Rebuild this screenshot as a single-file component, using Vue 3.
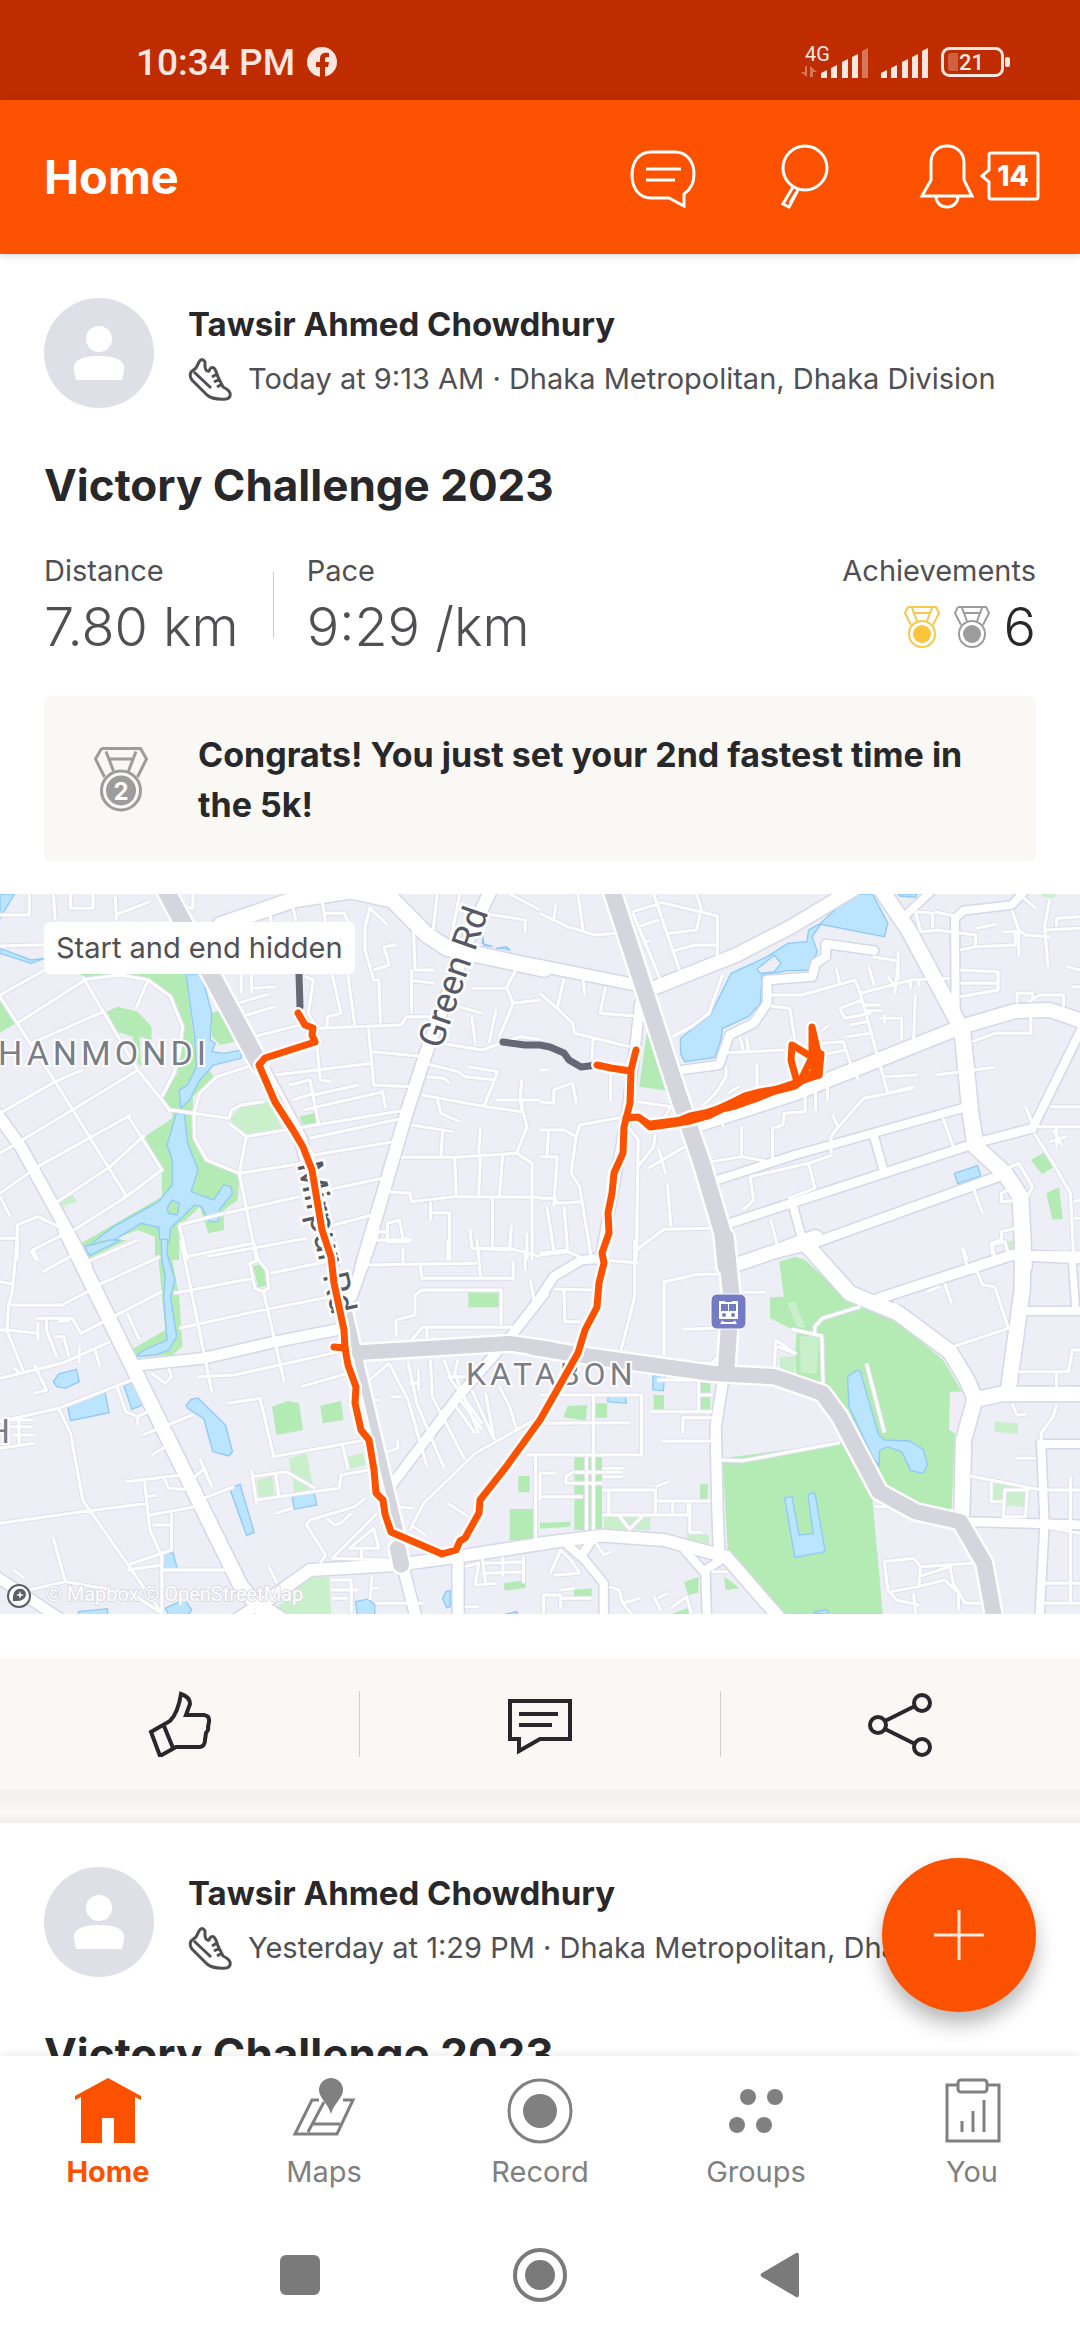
<script setup>
import { ref } from 'vue'

// feed posts
const posts = [
  {
    id: 1,
    athlete: 'Tawsir Ahmed Chowdhury',
    meta: 'Today at 9:13 AM · Dhaka Metropolitan, Dhaka Division',
    title: 'Victory Challenge 2023',
    distance: '7.80 km',
    pace: '9:29 /km',
    achievements: 6,
    congrats: 'Congrats! You just set your 2nd fastest time in the 5k!'
  },
  {
    id: 2,
    athlete: 'Tawsir Ahmed Chowdhury',
    meta: 'Yesterday at 1:29 PM · Dhaka Metropolitan, Dhaka Division',
    title: 'Victory Challenge 2023'
  }
]

const tabs = ['Home', 'Maps', 'Record', 'Groups', 'You']
const activeTab = ref('Home')

// signal bars: x and height
const signalBars = [[0, 8], [10, 13], [21, 19], [31, 24], [41, 30]]

// The map is split in four tiles, each with its own origin.
// roads: [width, path], highways: [width, path]
const tiles = [
  {
    at: 'translate(0 -14) scale(.3444 .3333)',
    park: 'M230 280H540L565 500L620 590L560 650V760L600 830L695 890L690 960L650 990V1050L605 1060L580 980L520 1040V1140H450V1070L400 1050L250 1110L235 1090L470 950L470 870L420 770L500 715V690L465 660L515 580L530 440L495 350L430 300L350 285L250 298ZM310 395L340 380L400 395L440 440V480L405 470L410 560L395 540L385 470L340 455ZM615 400L640 390L680 485L640 495L615 470ZM870 710L920 697L925 730L880 738ZM0 350L45 430L0 458Z',
    light: 'M670 715L700 680L780 665L820 745L720 768L680 750ZM170 960L210 945L225 965L190 975L180 1000Z',
    water: 'M0 42H42L0 115ZM0 205L90 240L130 235L90 250L0 220ZM540 282H585L615 400L610 480L625 490L615 515L650 520L700 510V535L620 555L580 600L550 660L525 685L520 630L545 615L570 560L565 470ZM512 700H535L545 790L575 870L555 935L620 960L650 915L670 920L675 940L640 985L632 1025H608L585 980L565 975L495 1045L487 1142H472L460 1042L410 1030L260 1125L247 1105L330 1040L460 965L500 915V840L485 795ZM1402 165L1400 190L1430 200L1405 196ZM1440 205L1470 200L1482 212L1465 206Z',
    island: 'M485 985L500 960L520 970L515 1005L490 1000Z',
    minor: 'M0 105H85V42M155 42L160 120M205 42V85H270V42M335 50L338 120M335 105L435 65M560 42V85L545 82M0 198L130 194M0 345L130 270M240 290L300 395L400 570L470 660L495 695M250 298L350 285L430 300L495 350L530 440L520 520L505 580L470 650M430 300L395 385M0 350L160 605L365 945L355 960M50 430L250 298M90 490L300 395M0 700L160 605L240 570M0 820L210 690L400 570M110 860L380 705M160 970L320 860L420 765M0 940L110 860M215 1050L360 955L470 870L370 705M720 560L630 590L580 640L563 700L565 775L600 840L695 880M495 690L665 715L672 690L700 675L765 665M665 730L715 770L860 745L1180 690M715 770L695 880L745 1140M695 880L880 850M655 1000L870 950M520 1035L650 1000M520 1035L545 1140M600 1130L890 1075M900 775L1170 715M910 825L1145 785M950 930L1110 895M970 1035L1080 1005M720 475L870 435L925 445L1165 435L1180 410H1290M915 445L930 600L960 605M800 585L1080 550M1070 445L1085 615L1200 620M1080 515L1240 530M840 615L900 600L925 730M850 660L910 640M910 645L1040 615M880 690L1115 635M1110 630L1120 685M690 370L780 342M700 410L798 380M730 340V285M735 325L798 320M700 285V340M885 290L910 300L895 400L920 445M965 285L990 400L950 410V440M1010 285L1030 435M850 80L860 125M785 100V125M935 60L945 125M940 100H1000L1010 125M1075 80L1060 140L1060 210L1085 300H1100L1105 430M1075 85L1125 135M1085 270L1130 255L1115 200L1150 195M1200 130L1205 270H1260M1195 270V400M1190 300L1260 310M1270 42L1255 170M1335 42L1310 170M1400 100L1525 120V160M1480 42L1568 90M1280 490L1400 510L1510 470L1568 478M1300 370L1400 400M1440 390L1420 490M1370 410L1380 490M1470 320L1490 370L1450 470M1370 325H1470L1510 245M1490 370L1568 360M1230 550L1330 575L1350 590L1440 600M1360 560L1445 575L1405 680M1240 590L1290 595L1305 610M1225 645L1410 680L1515 695V660M1440 660H1568M1270 660L1280 700L1335 725M1195 735L1315 755M1165 832H1320L1500 820L1545 850V1140M1285 755L1280 830M1320 830L1325 950M1395 820L1390 945M1460 820L1450 950M1395 740L1390 820M1130 935L1190 940L1195 965L1320 950L1568 952M1250 965V1020M1250 998H1305V1140M1430 950V1105M1485 1035L1480 1110L1370 1105L1365 1050M1515 600L1510 660L1530 740L1500 820M1125 1080V1030L1160 1020L1170 1075L1195 1080H1090L1090 1055H1125M1170 1105V1140M1530 1060V1140M0 950L30 1010M200 1055L110 1010L50 1035V1140M190 1060L95 1110L110 1140M0 1075H50',
    roads: [[34, 'M-10 700L60 800L210 1080L250 1160'], [46, 'M640 135L850 60L1020 32L1140 60L1240 165L1300 205L1580 267'], [36, 'M1430 20L1370 150L1240 510L1180 700L1050 1160'], [36, 'M755 550L870 770L930 980L965 1150']],
    highways: [[50, 'M478 25L752 550'], [5, 'M775 580L900 820L960 1100']]
  },
  {
    at: 'translate(540 -14) scale(.3444 .3333)',
    park: 'M312 445L372 632L288 620ZM1425 840L1468 815L1493 860L1458 883ZM1470 940L1507 922L1518 1018H1487Z',
    light: 'M1455 42H1495V54L1460 50ZM1355 1085L1375 1080V1110H1358Z',
    water: 'M905 42H965L1010 130L1000 170L815 133L790 170L805 215L780 270L720 272L645 285L640 370L605 410L530 445L525 480L508 532L420 545L408 520V475L495 405L555 280L660 230L720 190L775 185L780 150L815 130ZM1040 42H1095L1090 52L1045 48ZM1203 880L1270 857L1280 888L1213 912Z',
    island: 'M630 268L680 225L700 250L680 275L640 280Z',
    minor: 'M0 100L80 140L160 165L220 160M45 75L40 125M110 42L125 150M270 95L355 68L515 108V240M455 42L468 85L455 150L375 160M285 140L345 120M330 42L405 270M270 100L350 300M300 190L320 180M390 212L450 195H515M70 295L50 385L95 430L100 460L260 500M0 340L50 385M125 300L130 345M190 320L175 400L275 408M155 470L150 540M0 665L40 670V630L90 610M95 610L105 670M205 580V660M0 570H25M285 665L380 680L360 715M0 750L70 750L105 770L115 735L250 710M25 750L20 830M0 830H50L40 980M105 770L90 880L115 920L150 1140M0 955H45L50 970L120 965M70 980L80 1110M20 980L40 1110M0 1120L80 1110M255 740L285 780L280 1140M335 760L330 800L285 860M315 865L420 800M345 810L365 880M370 910L380 1040M280 1110L360 1048L495 1045M530 285L490 400L440 440L385 470M540 560V590L510 640L470 680M580 470L590 510M600 475L605 510M630 550V620M545 640L580 618M540 518L710 510M670 345H760L915 300L930 340L1010 640L1085 620M670 378L725 385L740 480M930 340L1080 300L1190 295M860 265L870 310M965 230L1040 243L1030 340M1040 215V300M955 260L970 315M1010 290L1030 320M1075 300V325M1100 295V318M870 385L935 360M870 385L885 415L960 400M935 375H990M945 392H995M985 415H1050V480M1000 405V430M890 470L960 460M900 435L950 425M820 490L880 485L905 560L925 600M820 525L885 510M820 450L838 437M1090 345L1085 480M1150 585L1320 562M1255 485L1320 460H1425V400M770 640V695L710 700L705 735L675 745V840M800 635V690M835 620V660M525 710L532 740M585 740V830L500 845M585 830L665 845M850 705L865 740L845 770V820M610 890L780 850L850 825M780 850L798 925L720 955M610 890L620 960L590 990M670 1020L690 1100M940 655L855 755M940 655L1085 625M1000 590L1095 585M1170 715L1200 800M1090 95L1105 155L1160 150M1090 95L1140 100V145M1145 95L1215 110M1150 150L1265 165V200L1220 210M1265 145L1325 133M1265 200L1380 195V150M1345 155H1400M1370 90L1390 150L1410 165L1480 170M1390 150V230M1480 60L1465 140L1475 260M1400 50L1440 85M1500 140V115L1568 110M1465 150L1568 145M1220 270L1330 275V330L1220 350M1220 310H1330M1385 370V340H1430V360M1420 365L1450 345H1520V380M1530 260L1568 270M1545 320H1568M1480 680H1568M1445 740H1568M1410 680L1430 730M1435 760L1490 850L1540 940L1550 1140M1480 785L1530 770M1490 750L1515 795M1500 740V800M1550 965L1568 960M1320 880L1390 850L1430 920L1410 960L1340 965V940L1380 920M1260 930L1285 1000M1380 1045L1340 1055V1080L1310 1090L1320 1130M1230 1105L1240 1140M1550 1015H1568M1420 1118H1568',
    roads: [[34, 'M-10 255L280 315'], [40, 'M340 320L570 225L730 140L910 28'], [44, 'M985 20L1070 150L1210 420'], [46, 'M1225 440L1250 700L1265 800L1350 880L1395 950L1405 1160'], [23, 'M1207 400L1205 115L1230 92L1370 75L1410 30'], [22, 'M1062 105L1135 35'], [42, 'M470 730L740 640L1225 440L1380 393L1480 390L1580 425'], [24, 'M1590 410L1430 745'], [24, 'M515 900L740 825L1225 685'], [26, 'M550 1030L1280 785L1430 745'], [28, 'M560 1152L780 1095L1330 890'], [23, 'M970 770L1000 880'], [23, 'M735 980L765 1090'], [25, 'M415 570L520 555L550 465L620 430L660 370V300L790 290L800 250L830 230V192L970 212'], [28, 'M290 370L270 560L250 720L175 1140']],
    highways: [[48, 'M205 20L300 320L400 640L470 850L530 1060L540 1160']]
  },
  {
    at: 'translate(0 346) scale(.3444 .3333)',
    park: 'M380 330L480 270L455 0H490L520 170L530 320L500 345L400 350ZM240 20L290 0H370L250 60ZM735 78L765 70L780 135L750 143ZM1360 157H1450V202H1360ZM790 500L835 483L868 490L880 570L803 585ZM930 497L990 483L998 540L937 550ZM1480 807H1548V895L1480 902ZM1505 708H1538V757H1505ZM1463 1030L1525 1020L1527 1043L1465 1052Z',
    light: 'M838 655L890 640L910 745L855 755ZM745 720L790 710L798 765L752 773ZM1010 650L1055 638L1060 675L1018 687ZM780 1125L900 1010H955L962 1125Z',
    water: 'M245 20L320 0H350L260 47ZM468 -2H487L485 40L508 120L495 170L513 290L490 330L450 345L390 350L420 330L485 300L475 170L480 110L470 60ZM155 425L170 402L222 388L230 425L190 445L165 440ZM195 495L305 458L317 518L205 542ZM360 438L390 423L413 495L383 508ZM540 497L555 478L575 474L655 555L675 635L665 648L618 635L592 537L545 505ZM667 745L697 733L738 877L716 887ZM848 770L912 756L920 795L855 808ZM472 943L502 937L515 987H477ZM228 1115L312 1106V1125H228ZM480 1105L535 1078L557 1110L545 1125H490ZM1032 1085L1070 1077L1088 1095V1125H1038ZM1285 1075L1295 1055L1307 1052V1100L1297 1103ZM1460 1125L1500 1115L1505 1125Z',
    island: '',
    minor: 'M50 0L35 160L25 195L20 270L70 400M0 125L35 132M25 195H180L255 155M0 270H20L110 280M125 95L220 40M90 30L105 60M105 235H210L235 280L470 155M135 235V270L165 350M170 245L205 240M160 290H185L200 350M0 415L180 370L320 305M110 250V300M100 375L135 450L100 460M230 320V370M275 325L290 380M0 545L170 505L395 415M170 505L205 580L240 780L470 1120M340 440L365 515L400 530V555M400 530L430 515M415 585L560 525M440 645L490 615M440 400L480 430L498 410L490 385M370 220L405 300M285 135L465 50M255 65L400 0M525 0L615 455M540 50L735 10M735 0L750 60L725 70L740 145L765 155L825 425M765 155L780 145L775 90L750 60M505 160L735 115M785 100L970 60M520 265L740 215L960 170M575 410L680 405L985 335M875 440L1010 400M660 490L755 475L795 650L1060 600M40 385L60 400M0 540H95M30 560H95M40 585H100M0 625L100 610M55 540V615M0 850L240 815L430 790M365 725L530 705M420 725L435 870L470 950V1120M430 770L455 765M475 710L490 745L560 750M435 825L570 800M445 855H500M498 820V930L370 975M370 990L470 975M470 990H670M590 775L680 740M155 895L190 1025L85 1050M190 1025L380 1060L470 1120M40 990L70 1015M580 655L615 740M560 715L595 685L605 720M730 690L745 790M735 710L830 695L915 745M800 700L810 770M745 780L910 755L985 745L990 705L1070 690M995 615L1010 685M800 820L850 805M1060 775L1030 800L900 840L890 855L945 945L930 970M950 835L970 855L990 850L1020 820M1095 820L965 955L1130 960M1085 865L1015 925H1100ZM1050 930V955M780 980L805 1030M1060 75L1385 70M1220 70L1225 115H1490V65M1225 150H1455V255M1195 300L1225 262H1490M1225 150L1205 165V225L1150 240V290M1385 0L1395 110M1170 30V70M1300 0V60M1390 25L1480 25L1568 50M1540 120L1550 180M1525 30V90M1120 5H1190M1240 265V295M1060 430L1130 370L1185 480L1240 680M1185 365L1210 490L1290 685M1250 360L1255 470L1350 660M1290 360L1310 420L1400 550M1330 360L1320 400L1390 580M1370 450L1430 590M1410 460L1435 600M1300 410H1350M1310 480L1380 580M1330 470L1400 570M1450 440L1480 500L1500 570M1190 870L1230 790L1380 640L1568 530M1110 640L1155 625V600M1080 480H1100M1135 470H1165M1190 430H1220M1215 390V450M1300 790L1360 830M1150 800L1200 805M1200 860L1235 885M1350 980L1390 970L1380 1035L1440 1030M1400 950L1410 1030M1400 970L1520 965M1400 1000L1520 995M1460 950V1010M1520 950V1030M960 1020H1020V1120M960 1050H1040M1080 1010L1075 1080M965 1075H1010M1090 1090H1230M1100 1045H1080M1350 1100H1390M1530 645H1568M1555 650V900',
    roads: [[42, 'M190 -30L380 370L700 1040L760 1110'], [32, 'M380 378L590 355L800 305L1000 265'], [36, 'M750 1100L900 990L1150 975L1330 950L1580 910'], [30, 'M-10 1010L180 1140'], [30, 'M680 1140L755 1090L830 1140'], [32, 'M1330 950V1140'], [32, 'M1170 980L1210 1140'], [32, 'M1085 -20L1020 170'], [28, 'M1580 160L1490 280L1330 470L1130 745']],
    highways: [[24, 'M1005 190L1050 400L1165 900'], [46, 'M1155 925L1165 975'], [44, 'M1042 338L1480 310L1600 328']]
  },
  {
    at: 'translate(540 346) scale(.3444 .3333)',
    park: 'M695 65L740 50L770 60L900 185L1040 245L1170 360L1225 455H1190L1188 570L1205 580L1195 810L1090 790L990 740L850 455L745 410L740 345L745 275L668 235V172L708 170ZM530 655L875 608L965 780L985 1000L995 1125H715L545 930ZM100 647H180V870H100ZM80 498L137 495L133 542L68 532ZM160 490H195V533H160ZM330 465H360V507H330ZM460 428H495V508H462ZM465 733H487V778H465ZM0 848L88 845V860L0 866ZM245 830H285L263 865ZM98 1050L150 1045V1073H100ZM418 1025L460 1012V1058L430 1065ZM535 1010L580 1045L538 1050ZM375 1125L430 1103L438 1125Z',
    light: 'M185 830H320V870H185ZM425 880L490 885V915L430 905ZM1320 545L1388 550V582L1320 575ZM1315 725L1360 735L1412 755L1410 800L1355 798L1315 780ZM755 290L810 285L803 400H757ZM718 190L740 185L770 262L748 262ZM695 350H740V410L697 385Z',
    water: 'M893 410L922 390L930 395L983 585L1000 600L1073 603L1113 628L1125 675L1112 700L1077 692L1050 635L1008 620L985 632V678L965 650L897 500ZM710 773L732 770L752 885L793 880L778 765L798 758L828 935L740 952ZM328 408L362 405L358 452L328 450ZM198 465L248 467L250 490L197 485ZM793 1118L830 1108L840 1125Z',
    island: '',
    minor: 'M0 45L80 35L115 50M40 147L150 150M70 150L72 245H115M275 0V170L235 330M180 60L285 68M360 345V125L460 103H515M415 268L510 265M590 157H655M515 350L500 370H360M680 380L685 300L740 340L690 320M0 550L260 548M295 645V465H0M0 645H295M155 465V870M135 650V870M320 515H500M340 420H460V510M460 465H500M415 580V533H500M355 603H500M0 700H45M0 770H125M95 697L75 710V730H180M100 697H240M180 685H245M180 710H240M180 750H335V820M335 740L375 725M335 783H495M385 783V820M435 790V877H470M180 825H430V790M230 828L260 868L298 828M200 750V820M0 700V780M30 1000L60 930L90 960L115 1000L40 1005M160 905L185 945L205 935M10 1121V1065H60V1105M60 1050L100 1045M60 1075H150M200 1040L230 1050L240 1090L290 1075M240 1090L265 1121M330 1070L350 1110M340 1075L370 1060M380 1105L425 1070L440 1121M500 995H545M1225 25L1245 95L1270 95L1285 135L1320 140L1360 265L1200 320M1175 130L1195 190M1125 155L1160 140M1315 45L1310 15L1350 5L1360 45M1390 395H1535L1545 330H1568M1500 395V440M1370 490L1385 525L1410 523M1500 495L1490 530L1455 580V610M1380 655H1440M1250 708L1455 750H1568M1540 710V1090M1465 1030H1568M1465 1090H1568M1310 725V785H1345M1350 750H1415L1410 830H1345ZM1465 860L1568 880M970 800H1040M1000 965L1085 955L1105 980L1255 970M1000 965L1010 1050L1035 1080L1100 1095M1105 980L1100 1040L1020 1055M1100 1010L1190 980L1200 1030L1235 1090H1280M1100 1040L1175 1020L1215 1060V1110M1085 1060L1090 1121M1030 190L1070 230L1090 235M525 660L590 662L870 608M930 200L820 235L798 260V280M730 268L818 288L822 430M948 370L1000 578',
    roads: [[40, 'M575 72L700 28L800 -10'], [44, 'M770 10L900 160L1040 220L1190 335L1240 420L1265 480'], [44, 'M1265 470L1230 600L1225 820'], [44, 'M1260 480L1340 462H1580'], [30, 'M985 175L1370 45L1580 55'], [44, 'M1402 -20L1400 150L1360 450'], [24, 'M1415 213H1580'], [20, 'M1545 55L1555 200'], [26, 'M1240 845L1580 855'], [24, 'M1455 610L1465 850L1450 1140'], [24, 'M1455 612H1580'], [30, 'M530 430L510 560L515 800L520 940'], [36, 'M-10 912L180 887L360 900L540 950L700 1140'], [24, 'M540 950L480 990L485 1140'], [24, 'M420 930L480 1000'], [24, 'M80 915L130 960L185 1030V1140'], [24, 'M155 895L125 940'], [26, 'M-20 205L40 110L120 60L180 55']],
    highways: [[48, 'M538 -10L555 160L540 400'], [46, 'M-20 322L150 350L500 400L680 410L820 460L870 530L985 755L1090 815L1220 845L1290 970L1320 1140']]
  }
]

const routePaths = [
  'M298 119L305 131L313 134L312 141L315 148L265 164L259 171L275 208L293 236L303 253L312 276L317 306L322 336L331 363L334 389L344 436L345 454L348 471L356 493L355 509L361 536L369 546L374 576L376 599L383 606L385 620L391 638L442 660L456 656L460 647L465 644L479 619L480 606L506 573L540 526L561 489L578 459L585 436L597 413L599 389L604 369L602 359L609 339L608 319L612 299L614 279L623 259L624 233L630 209L631 176L636 156',
  'M345 454L334 453',
  'M597 171L611 174L630 177',
  'M626 224L638 223L650 231L678 227L690 222L705 219L718 215L733 208L745 202L760 198L778 195L795 189L819 181L818 159L812 133L812 158L814 178L795 192L775 197L755 205L735 212L722 215L708 222L690 227L672 230L650 233L640 224',
  'M797 188L791 166L792 151L812 163L801 186M821 160L819 181M651 230L690 225L740 207L790 191'
]
</script>

<template>
  <div class="screen">
    <!-- status bar -->
    <div class="status-bar">
      <div class="status-left">
        <span>10:34 PM</span>
        <svg width="30" height="30" viewBox="0 0 30 30">
          <circle cx="15" cy="15" r="15" fill="#fbe7e0" />
          <path d="M13 30V20H9v-5h4v-3c0-5 3-7 9-6v4c-3 0-4 0-4 3v2h4l-1 5h-3v10z" fill="#bf2c00" />
        </svg>
      </div>
      <div class="status-right">
        <svg width="128" height="40" viewBox="0 0 128 40">
          <text x="4" y="19" class="net-type">4G</text>
          <path d="M0 30h4v-6h2v11zM9 35V24l7 6h-4v5z" fill="#fff" opacity=".35" />
          <g v-for="(bar, i) in signalBars" :key="i">
            <path :d="`M${20 + bar[0]} 36v-${bar[1] - 3}l6 -3v${bar[1]}z`" class="signal" :class="{ faded: i === 4 }" />
            <path :d="`M${80 + bar[0]} 36v-${bar[1] - 3}l6 -3v${bar[1]}z`" class="signal" />
          </g>
        </svg>
        <svg width="70" height="30" viewBox="0 0 70 30">
          <rect x="1.5" y="1.5" width="60" height="27" rx="7" fill="none" stroke="#fbe7e0" stroke-width="3" />
          <path d="M17 6h-7q-3 0-3 3v12q0 3 3 3h7z" fill="#fff" opacity=".25" />
          <rect x="64" y="10" width="5" height="10" rx="2" fill="#fbe7e0" />
          <text x="18" y="23" class="battery-text">21</text>
        </svg>
      </div>
    </div>

    <!-- app header -->
    <header class="app-header">
      <h1>Home</h1>
      <div class="header-actions">
        <button type="button" aria-label="Messages">
          <svg class="icon line" viewBox="0 0 66 66">
            <path d="M21 8H45C57 8 64 18 64 30C64 39 60 46 54 50V62L39 54H21C9 54 2 44 2 31S9 8 21 8Z" />
            <path d="M16 25H51M16 36H45" />
          </svg>
        </button>
        <button type="button" aria-label="Search">
          <svg class="icon line" viewBox="0 0 66 66">
            <circle cx="33" cy="24" r="22" />
            <path d="M21 43L11 60L17 63L26 46M18 59L24 49" />
          </svg>
        </button>
        <button type="button" class="bell" aria-label="Notifications">
          <svg class="icon line" viewBox="0 0 66 66">
            <path d="M33 2C23 2 17 9 17 19V36L8 52H58L50 36V19C50 9 43 2 33 2Z" />
            <path d="M22 52C22 59 27 63 33 63S44 59 44 52" />
          </svg>
          <svg class="line" width="60" height="66" viewBox="0 0 60 66">
            <path d="M11 9H56q2 0 2 2V53q0 2-2 2H11q-2 0-2-2V38L2 32L9 26V11q0-2 2-2Z" />
            <text x="33" y="42" class="badge-text">14</text>
          </svg>
        </button>
      </div>
    </header>

    <!-- feed -->
    <div class="feed-wrap">
      <main class="feed">
        <article v-for="post in posts" :key="post.id" class="post">
          <div class="athlete">
            <svg class="avatar" viewBox="0 0 110 110">
              <circle cx="55" cy="55" r="55" fill="#dfdfe8" />
              <circle cx="55" cy="41" r="13" fill="#fff" />
              <path d="M30 72C28 60 44 58 55 58S82 60 80 72L78 82H32Z" fill="#fff" />
            </svg>
            <div class="athlete-info">
              <div class="athlete-name">{{ post.athlete }}</div>
              <div class="athlete-meta">
                <svg class="shoe" viewBox="0 0 44 44">
                  <path d="M3 15L8 11L11 5Q14 0 17 5L17 10Q18 15 21 14Q23 9 26 11Q28 13 30 20L35 30Q41 33 42 36Q43 41 38 42Q25 43 19 38L4 23Q1 19 3 15ZM6 15L23 31M24 20L29 17M26 25L32 22M29 30L34 27" />
                </svg>
                <span class="meta-text">{{ post.meta }}</span>
              </div>
            </div>
          </div>

          <h2>{{ post.title }}</h2>

          <template v-if="post.distance">
            <div class="stats">
              <div class="stat">
                <span class="stat-label">Distance</span>
                <span class="stat-value">{{ post.distance }}</span>
              </div>
              <div class="stat divided">
                <span class="stat-label">Pace</span>
                <span class="stat-value">{{ post.pace }}</span>
              </div>
              <div class="stat achievements">
                <span class="stat-label">Achievements</span>
                <span class="stat-value dark">
                  <svg v-for="kind in ['gold', 'silver']" :key="kind" class="medal" :class="kind" viewBox="0 0 36 44">
                    <path d="M4 2H32L35 8L29 20M4 2L1 8L7 20M8 3L13 16M28 3L23 16M9 8H27" />
                    <circle cx="18" cy="29" r="13" />
                    <circle cx="18" cy="29" r="9" class="medal-core" />
                  </svg>
                  {{ post.achievements }}
                </span>
              </div>
            </div>

            <div class="congrats">
              <svg class="medal silver large" viewBox="0 0 36 44">
                <path d="M5 1H31L35 8L29 20M5 1L1 8L7 20M8 3L13 16M28 3L23 16M9 8H27" />
                <circle cx="18" cy="29" r="13" />
                <circle cx="18" cy="29" r="10" class="medal-core" />
                <text x="18" y="35" class="medal-rank">2</text>
              </svg>
              <p>{{ post.congrats }}</p>
            </div>

            <!-- route map -->
            <div class="map">
              <svg class="map-canvas" viewBox="0 0 1080 720">
                <rect width="1080" height="720" fill="#edeef6" />
                <g v-for="(tile, i) in tiles" :key="'a' + i" :transform="tile.at">
                  <path :d="tile.park" fill="#b4ebb4" />
                  <path :d="tile.light" fill="#c9efcb" />
                  <path :d="tile.water" class="water" />
                  <path :d="tile.island" :fill="i === 0 ? '#b4ebb4' : '#edeef6'" stroke="#90c9fa" stroke-width="4" />
                  <path :d="tile.minor" class="road minor-case" />
                </g>
                <g v-for="(tile, i) in tiles" :key="'b' + i" :transform="tile.at">
                  <path v-for="(road, j) in tile.roads" :key="j" :d="road[1]" :stroke-width="road[0] + 9" class="road case" />
                </g>
                <g v-for="(tile, i) in tiles" :key="'c' + i" :transform="tile.at">
                  <path :d="tile.minor" class="road minor" />
                  <path v-for="(road, j) in tile.roads" :key="j" :d="road[1]" :stroke-width="road[0]" class="road fill" />
                </g>
                <g v-for="(tile, i) in tiles" :key="'d' + i" :transform="tile.at">
                  <path v-for="(road, j) in tile.highways" :key="j" :d="road[1]" :stroke-width="road[0] + 14" class="road fill" />
                </g>
                <g v-for="(tile, i) in tiles" :key="'e' + i" :transform="tile.at">
                  <path v-for="(road, j) in tile.highways" :key="j" :d="road[1]" :stroke-width="road[0]" class="road highway" />
                </g>

                <!-- metro station -->
                <g transform="translate(711 400)">
                  <rect width="35" height="35" rx="6" fill="#727bc4" stroke="#fff" />
                  <path d="M8 7h19v18H8z" fill="#fff" />
                  <path d="M10 10h7v7h-7zM18 10h7v7h-7zM14 6h7v2h-7z" fill="#727bc4" />
                  <circle cx="13" cy="21" r="2" fill="#727bc4" />
                  <circle cx="22" cy="21" r="2" fill="#727bc4" />
                  <path d="M10 30l2-3M25 30l-2-3M11 29h13" stroke="#fff" stroke-width="2" />
                </g>

                <text x="210" y="171" class="place end">HANMONDI</text>
                <text x="466" y="491" class="place small">KATABON</text>
                <text x="14" y="549" class="place end">H</text>
                <text transform="translate(441 156) rotate(-71)" class="street">Green Rd</text>
                <text transform="translate(297 270) rotate(77)" class="street">Mirpur Rd</text>

                <path d="M299 60L299 80L300 113L298 119M503 148L525 151L540 151L550 153L564 159L569 166L581 173L597 171" class="route hidden-part" />
                <path v-for="(d, i) in routePaths" :key="'h' + i" :d="d" class="route halo" />
                <path v-for="(d, i) in routePaths" :key="'r' + i" :d="d" class="route" />

                <circle cx="19" cy="702" r="11" fill="#fff" stroke="#5c5f6a" stroke-width="2" />
                <path d="M13 707q-1-10 5-12q7-1 8 5q0 8-13 7z" fill="#5c5f6a" />
                <path d="M20 697l1 3l3 1l-3 1l-1 3l-1-3l-3-1l3-1z" fill="#fff" />
                <text x="46" y="707" class="attribution">© Mapbox © OpenStreetMap</text>
              </svg>
              <span class="map-note">Start and end hidden</span>
            </div>

            <!-- kudos / comment / share -->
            <div class="post-actions">
              <button type="button" aria-label="Give kudos">
                <svg class="icon dark-line" viewBox="0 0 66 66">
                  <path d="M34 3Q43 6 43 13L39 24H57Q63 25 62 31L61 36Q62 39 59 42L58 49Q58 55 53 56H29L13 65L4 41L23 30Q31 22 34 3ZM17 35L26 57" />
                </svg>
              </button>
              <button type="button" aria-label="Comment">
                <svg class="icon dark-line" viewBox="0 0 66 66">
                  <path d="M3 10H63V48H33L12 60V48H3ZM12 23H51M12 34H45" />
                </svg>
              </button>
              <button type="button" aria-label="Share">
                <svg class="icon dark-line" viewBox="0 0 66 66">
                  <circle cx="55" cy="12" r="8" />
                  <circle cx="11" cy="34" r="8" />
                  <circle cx="55" cy="56" r="8" />
                  <path d="M18 30L48 15M18 38L48 53" />
                </svg>
              </button>
            </div>
            <div class="post-gap"></div>
          </template>
        </article>
      </main>

      <button type="button" class="fab" aria-label="Add">
        <svg width="50" height="50" viewBox="0 0 50 50">
          <path d="M25 0V50M0 25H50" stroke="#ffe9df" stroke-width="3" />
        </svg>
      </button>
    </div>

    <!-- bottom navigation -->
    <nav class="tab-bar">
      <button v-for="tab in tabs" :key="tab" type="button" :class="{ active: activeTab === tab }" @click="activeTab = tab">
        <svg class="icon nav-icon" viewBox="0 0 66 66">
          <path v-if="tab === 'Home'" d="M33 0L66 18V22L60 19V65H39V40H27V65H6V19L0 22V18Z" fill="currentColor" />
          <g v-else-if="tab === 'Maps'">
            <path d="M28 22H21L4 56H46L62 22H52M33 24L17 54M22 46H49" />
            <path d="M40 36C37 25 28 20 28 12A12 12 0 0 1 52 12C52 20 43 25 40 36Z" fill="currentColor" stroke="none" />
          </g>
          <g v-else-if="tab === 'Record'">
            <circle cx="33" cy="33" r="31" />
            <circle cx="33" cy="33" r="17" fill="currentColor" stroke="none" />
          </g>
          <g v-else-if="tab === 'Groups'" class="dots">
            <circle cx="25" cy="19" r="8" />
            <circle cx="52" cy="19" r="8" />
            <circle cx="14" cy="47" r="8" />
            <circle cx="41" cy="47" r="8" />
          </g>
          <g v-else>
            <path d="M19 7H8V63H60V7H48M23 43V54M34 33V54M45 22V54" />
            <rect x="19" y="2" width="29" height="12" rx="3" />
          </g>
        </svg>
        <span>{{ tab }}</span>
      </button>
    </nav>

    <!-- system navigation -->
    <div class="system-bar">
      <svg width="54" height="54" viewBox="0 0 54 54">
        <rect x="7" y="7" width="40" height="40" rx="6" fill="#7a7a7a" />
      </svg>
      <svg width="54" height="54" viewBox="0 0 54 54">
        <circle cx="27" cy="27" r="25" fill="none" stroke="#7a7a7a" stroke-width="4" />
        <circle cx="27" cy="27" r="15" fill="#7a7a7a" />
      </svg>
      <svg width="54" height="54" viewBox="0 0 54 54">
        <path d="M9 25L43 5Q46 4 46 7V47Q46 50 43 49L9 29Q6 27 9 25Z" fill="#7a7a7a" />
      </svg>
    </div>
  </div>
</template>

<style>
body {
  margin: 0;
  overflow: hidden;
}
</style>

<style scoped>
.screen {
  display: flex;
  flex-direction: column;
  height: 100vh;
  background-color: #fff;
  font-family: Inter, "Liberation Sans", sans-serif;
  color: #28282b;
}

button {
  display: flex;
  align-items: center;
  justify-content: center;
  padding: 0;
  border: none;
  background: none;
  font-family: inherit;
  color: inherit;
  cursor: pointer;
}

.icon {
  display: block;
  width: 66px;
  height: 66px;
}

/* status bar */
.status-bar {
  display: flex;
  align-items: center;
  justify-content: space-between;
  height: 100px;
  padding: 24px 69px 0 136px;
  box-sizing: border-box;
  background-color: #bf2c00;
  font-family: Roboto, "Liberation Sans", sans-serif;
  font-size: 37px;
  font-weight: 500;
  color: #fbe7e0;
}

.status-left,
.status-right {
  display: flex;
  align-items: center;
  gap: 12px;
}

.net-type {
  font-size: 20px;
  font-weight: 400;
  fill: #fbe7e0;
}

.battery-text {
  font-size: 22px;
  fill: #fbe7e0;
}

.signal {
  fill: #fbe7e0;
}

.signal.faded {
  opacity: 0.4;
}

/* app header */
.app-header {
  position: relative;
  z-index: 2;
  display: flex;
  align-items: center;
  justify-content: space-between;
  height: 154px;
  padding: 0 40px 0 44px;
  background-color: #fc5200;
  color: #fff;
  box-shadow: 0 2px 8px rgba(0, 0, 0, 0.15);
}

.app-header h1 {
  margin: 0;
  font-size: 47px;
  line-height: 60px;
  font-weight: 700;
}

.header-actions {
  display: flex;
  gap: 76px;
}

.line {
  fill: none;
  stroke: #fff;
  stroke-width: 3;
}

.badge-text {
  font-size: 28px;
  font-weight: 800;
  text-anchor: middle;
  fill: #fff;
  stroke: none;
}

/* feed */
.feed-wrap {
  position: relative;
  flex: 1;
  min-height: 0;
}

.feed {
  height: 100%;
  overflow: hidden;
}

.post-gap {
  height: 33px;
  background: linear-gradient(#f1f0eb, #f9f8f5 70%, #f1f0eb);
}

.athlete {
  display: flex;
  align-items: center;
  gap: 34px;
  padding: 44px 44px 0;
}

.avatar {
  flex: none;
  width: 110px;
  height: 110px;
}

.athlete-info {
  flex: 1;
  min-width: 0;
  padding-bottom: 6px;
  white-space: nowrap;
}

.athlete-name {
  font-size: 33px;
  line-height: 50px;
  font-weight: 700;
}

.athlete-meta {
  display: flex;
  align-items: center;
  gap: 16px;
  padding-top: 8px;
  font-size: 29px;
  line-height: 44px;
  color: #505054;
}

.meta-text {
  min-width: 0;
  overflow: hidden;
  text-overflow: ellipsis;
}

.shoe {
  flex: none;
  width: 44px;
  height: 44px;
  fill: none;
  stroke: #505054;
  stroke-width: 3;
}

h2 {
  margin: 0;
  padding: 48px 44px 0;
  font-size: 44px;
  line-height: 58px;
  font-weight: 700;
}

/* stats */
.stats {
  display: flex;
  padding: 38px 44px 0;
}

.stat {
  display: flex;
  flex-direction: column;
  padding-right: 34px;
}

.divided {
  position: relative;
  padding-left: 34px;
}

.divided::before {
  content: '';
  position: absolute;
  left: 0;
  top: 20px;
  height: 66px;
  border-left: 1px solid #ccc;
}

.achievements {
  align-items: flex-end;
  margin-left: auto;
  padding-right: 0;
}

.stat-label {
  font-size: 29px;
  line-height: 38px;
  color: #505054;
}

.stat-value {
  display: flex;
  align-items: center;
  gap: 14px;
  font-size: 54px;
  line-height: 74px;
  font-weight: 300;
  color: #505054;
}

.stat-value.dark {
  color: #28282b;
}

.medal {
  width: 36px;
  height: 44px;
  fill: none;
  stroke-width: 2;
}

.medal.gold {
  stroke: #f6c84c;
}

.medal.silver {
  stroke: #9c9c9c;
}

.medal.large {
  flex: none;
  width: 54px;
  height: 66px;
}

.gold .medal-core {
  fill: #fcc33c;
  stroke: none;
}

.silver .medal-core {
  fill: #9c9c9c;
  stroke: none;
}

.medal-rank {
  font-size: 16px;
  font-weight: 700;
  text-anchor: middle;
  fill: #fff;
  stroke: none;
}

.congrats {
  display: flex;
  align-items: center;
  gap: 50px;
  margin: 32px 44px 33px;
  padding: 34px 50px 31px;
  border-radius: 6px;
  background-color: #f9f8f5;
}

.congrats p {
  margin: 0;
  font-size: 34px;
  line-height: 50px;
  font-weight: 700;
}

/* map */
.map {
  position: relative;
}

.map-canvas {
  display: block;
  width: 100%;
}

.map-note {
  position: absolute;
  top: 28px;
  left: 44px;
  padding: 7px 12px;
  border-radius: 6px;
  background-color: #fff;
  font-size: 29px;
  line-height: 38px;
  color: #505054;
}

.water {
  fill: #bbe5ff;
  stroke: #90c9fa;
  stroke-width: 4;
}

.road {
  fill: none;
  stroke-linejoin: round;
}

.minor-case {
  stroke: #e0e0ee;
  stroke-width: 15;
}

.minor {
  stroke: #fff;
  stroke-width: 9;
}

.case {
  stroke: #d6d7e8;
  stroke-linecap: round;
}

.fill {
  stroke: #fff;
  stroke-linecap: round;
}

.highway {
  stroke: #d5d6dd;
  stroke-linecap: round;
}

.place {
  font-family: Roboto, "Liberation Sans", sans-serif;
  font-size: 34px;
  letter-spacing: 4px;
  fill: #7b7e89;
  stroke: #fff;
  stroke-width: 4;
  paint-order: stroke;
}

.place.small {
  font-size: 32px;
}

.place.end {
  text-anchor: end;
}

.street {
  font-family: Roboto, "Liberation Sans", sans-serif;
  font-size: 36px;
  fill: #565965;
  stroke: #fff;
  stroke-width: 5;
  paint-order: stroke;
}

.route {
  fill: none;
  stroke: #fc5200;
  stroke-width: 7;
  stroke-linecap: round;
  stroke-linejoin: round;
}

.route.halo {
  stroke: #fff;
  stroke-width: 12;
}

.route.hidden-part {
  stroke: #666975;
}

.attribution {
  font-family: Roboto, "Liberation Sans", sans-serif;
  font-size: 20px;
  fill: #fff;
  stroke: #d9dae4;
  stroke-width: 2;
  paint-order: stroke;
}

/* post actions */
.post-actions {
  display: flex;
  align-items: center;
  height: 132px;
  margin-top: 44px;
  background-color: #f9f8f5;
}

.post-actions button {
  flex: 1;
}

.post-actions button + button {
  border-left: 1px solid #d0d0d0;
}

.dark-line {
  fill: none;
  stroke: #28282b;
  stroke-width: 4;
}

/* add button */
.fab {
  position: absolute;
  right: 44px;
  bottom: 44px;
  width: 154px;
  height: 154px;
  border-radius: 50%;
  background-color: #fc5200;
  box-shadow: 0 12px 20px rgba(0, 0, 0, 0.28);
}

/* bottom navigation */
.tab-bar {
  position: relative;
  display: flex;
  height: 154px;
  background-color: #fff;
  box-shadow: 0 -2px 8px rgba(0, 0, 0, 0.08);
}

.tab-bar button {
  flex: 1;
  flex-direction: column;
  gap: 8px;
  padding-top: 4px;
  font-size: 29px;
  line-height: 40px;
  color: #808080;
}

.tab-bar button.active {
  font-weight: 700;
  color: #fc5200;
}

.nav-icon {
  fill: none;
}

.nav-icon g {
  stroke: currentColor;
  stroke-width: 3;
}

.nav-icon .dots {
  fill: currentColor;
  stroke: none;
}

.system-bar {
  position: relative;
  display: flex;
  align-items: center;
  justify-content: center;
  gap: 186px;
  height: 130px;
  background-color: #fff;
}
</style>
